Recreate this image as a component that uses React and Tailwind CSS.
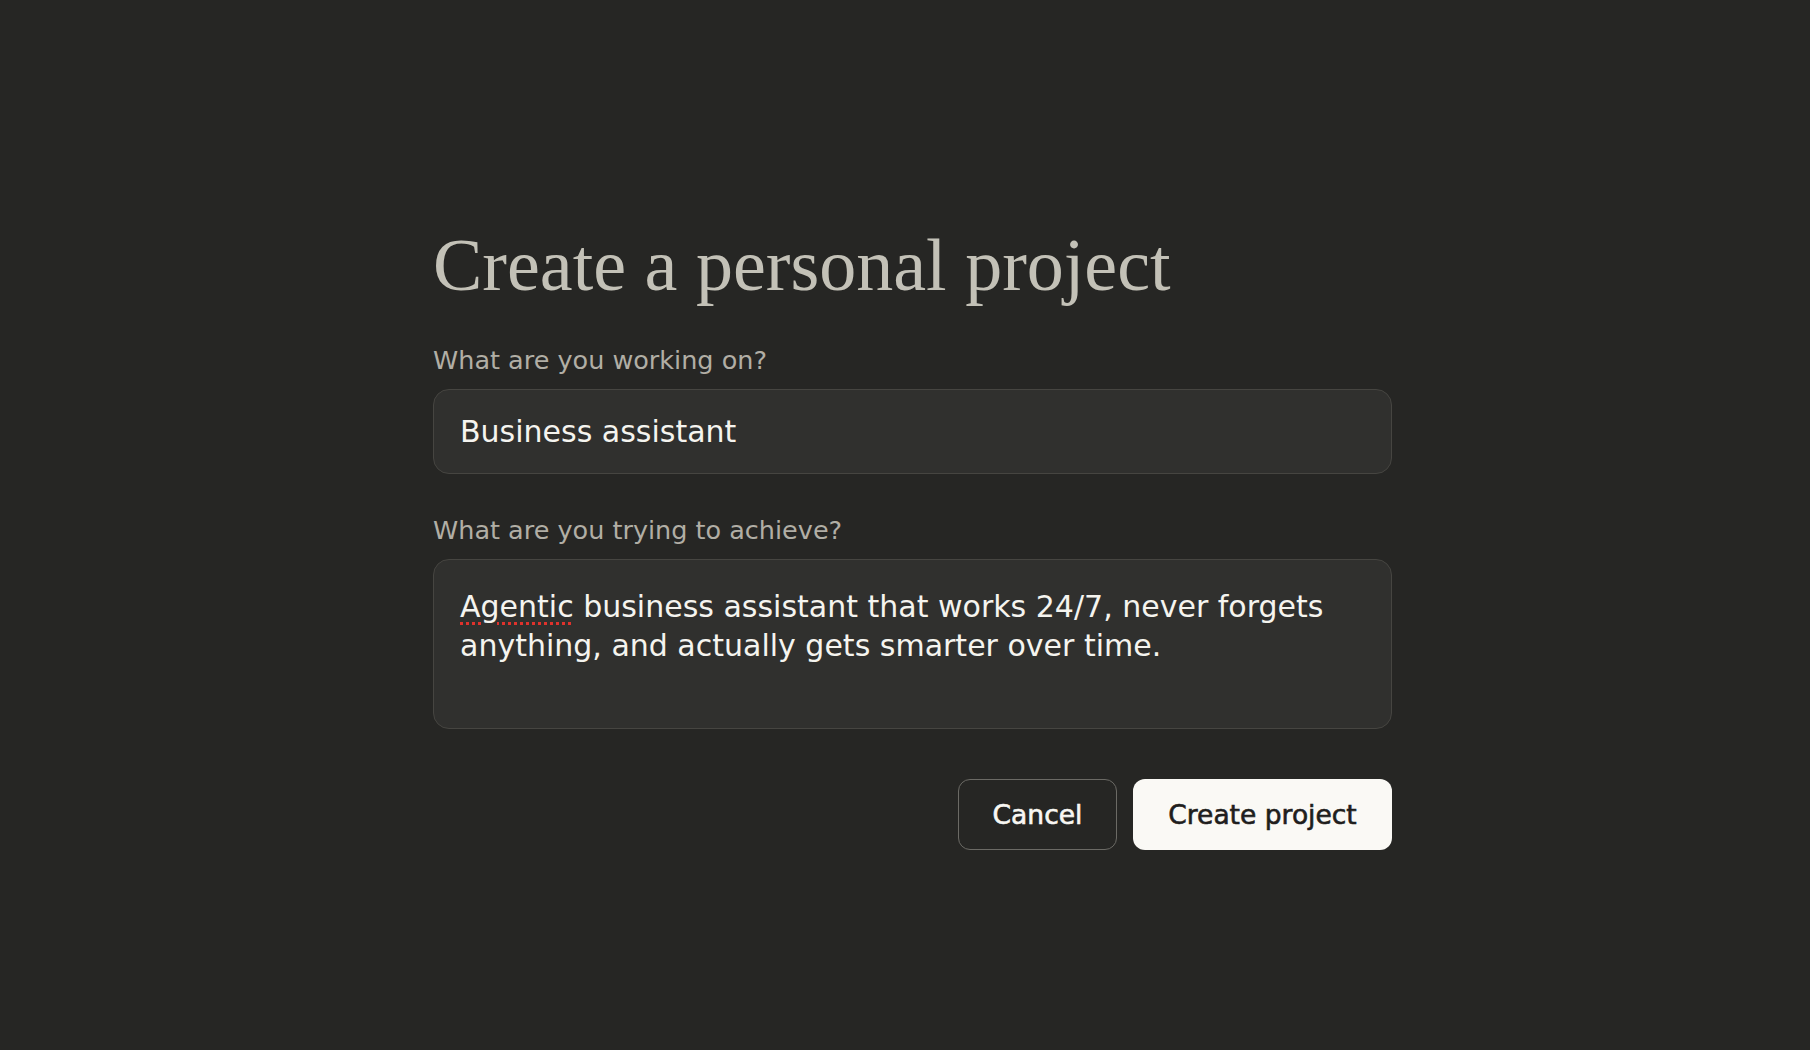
import React, { useState } from 'react';

const sans = "font-['DejaVu_Sans',sans-serif]";

const App = () => {
  const [name, setName] = useState('Business assistant');

  return (
    <div className="min-h-screen w-full bg-[#262624]">
      <div className="ml-[433px] w-[959px] pt-[221px]">
        <h1 className="font-['Liberation_Serif',serif] text-[74px] leading-[88px] text-[#c3c1b7] mb-[35px]">
          Create a personal project
        </h1>

        <label className={`${sans} block text-[25.5px] leading-[32px] text-[#b1aea5] mb-[13px]`}>
          What are you working on?
        </label>
        <input
          className={`${sans} block w-full h-[85px] px-[26px] rounded-[16px] border border-[#464541] bg-[#30302e] text-[30px] text-[#f5f4ef] outline-none`}
          value={name}
          onChange={(e) => setName(e.target.value)}
        />

        <label className={`${sans} block mt-[40px] text-[25.5px] leading-[32px] text-[#b1aea5] mb-[13px]`}>
          What are you trying to achieve?
        </label>
        <div
          className={`${sans} w-full h-[170px] px-[26px] pt-[27px] rounded-[16px] border border-[#464541] bg-[#30302e] text-[30px] leading-[39px] text-[#f5f4ef]`}
        >
          <span className="underline decoration-dotted decoration-[#e0322c] decoration-[3px] underline-offset-[5px]">
            Agentic
          </span>{' '}
          business assistant that works 24/7, never forgets anything, and actually gets smarter over time.
        </div>

        <div className="mt-[50px] flex justify-end gap-[16px]">
          <button
            className={`${sans} w-[159px] h-[71px] rounded-[12px] border border-[#6b6a65] bg-transparent text-[26.5px] text-[#f8f7f3] [-webkit-text-stroke:0.6px_#f8f7f3]`}
          >
            Cancel
          </button>
          <button
            className={`${sans} w-[259px] h-[71px] rounded-[12px] bg-[#faf9f5] text-[26.5px] text-[#1f1e1d] [-webkit-text-stroke:0.6px_#1f1e1d]`}
          >
            Create project
          </button>
        </div>
      </div>
    </div>
  );
};

export default App;
